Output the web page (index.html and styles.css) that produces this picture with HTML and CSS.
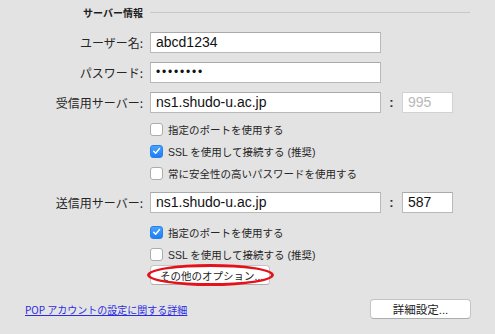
FILE: index.html
```html
<!DOCTYPE html>
<html lang="ja">
<head>
<meta charset="utf-8">
<title>サーバー情報</title>
<link rel="stylesheet" href="styles.css">
</head>
<body>
<div class="panel">
  <div class="section-head">
    <span class="section-title">サーバー情報</span>
    <span class="section-rule"></span>
  </div>

  <div class="field-row">
    <label class="field-label">ユーザー名:</label>
    <div class="text-field">abcd1234</div>
  </div>
  <div class="field-row">
    <label class="field-label">パスワード:</label>
    <div class="text-field password">••••••••</div>
  </div>
  <div class="field-row">
    <label class="field-label">受信用サーバー:</label>
    <div class="text-field">ns1.shudo-u.ac.jp</div>
    <span class="port-colon">:</span>
    <div class="text-field port disabled">995</div>
  </div>

  <div class="check-row"><span class="checkbox"></span><span class="check-text">指定のポートを使用する</span></div>
  <div class="check-row"><span class="checkbox checked"><svg viewBox="0 0 12 12"><path d="M3 6.3 L5.1 8.5 L9.2 3.4" /></svg></span><span class="check-text">SSL を使用して接続する (推奨)</span></div>
  <div class="check-row"><span class="checkbox"></span><span class="check-text">常に安全性の高いパスワードを使用する</span></div>

  <div class="field-row outgoing">
    <label class="field-label">送信用サーバー:</label>
    <div class="text-field">ns1.shudo-u.ac.jp</div>
    <span class="port-colon">:</span>
    <div class="text-field port">587</div>
  </div>

  <div class="check-row"><span class="checkbox checked"><svg viewBox="0 0 12 12"><path d="M3 6.3 L5.1 8.5 L9.2 3.4" /></svg></span><span class="check-text">指定のポートを使用する</span></div>
  <div class="check-row"><span class="checkbox"></span><span class="check-text">SSL を使用して接続する (推奨)</span></div>

  <div class="option-row">
    <span class="option-wrap">
      <button class="push-button option-button">その他のオプション...</button>
      <span class="highlight-ring"></span>
    </span>
  </div>

  <div class="footer-row">
    <a class="help-link" href="#">POP アカウントの設定に関する詳細</a>
    <button class="push-button detail-button">詳細設定...</button>
  </div>
</div>
</body>
</html>
```
FILE: styles.css
```css
html, body {
  margin: 0;
  padding: 0;
}
body {
  background: #e3e3e3;
  font-family: "Liberation Sans", "Noto Sans CJK JP", sans-serif;
  color: #222;
  width: 495px;
  height: 334px;
  overflow: hidden;
}
.panel {
  display: flex;
  flex-direction: column;
}
.section-head {
  display: flex;
  align-items: center;
  height: 25px;
  padding-left: 83px;
  width: 387px;
}
.section-title {
  font-size: 10px;
  font-weight: bold;
  color: #1e1e1e;
  font-family: "Noto Sans CJK JP", sans-serif;
}
.section-rule {
  flex: 1;
  height: 1px;
  background: #c8c8c8;
  margin-left: 7px;
}
.field-row {
  display: flex;
  align-items: center;
  height: 21px;
  margin-top: 7px;
  margin-bottom: 2px;
}
.field-label {
  width: 143px;
  padding-right: 7px;
  text-align: right;
  font-size: 12px;
  font-family: "Noto Sans CJK JP", sans-serif;
  color: #262626;
  box-sizing: content-box;
}
.text-field {
  box-sizing: border-box;
  width: 231px;
  height: 21px;
  background: #fff;
  border: 1px solid #b9b9b9;
  border-top-color: #a9a9a9;
  font-size: 14px;
  line-height: 19px;
  padding-left: 5px;
  color: #111;
  white-space: nowrap;
  overflow: hidden;
}
.text-field.password {
  font-size: 12px;
  letter-spacing: 1.8px;
  line-height: 19px;
}
.port-colon {
  width: 21px;
  text-align: center;
  font-size: 13px;
  font-weight: bold;
  color: #333;
}
.text-field.port {
  width: 51px;
}
.text-field.disabled {
  color: #b8b8b8;
  border-color: #d2d2d2;
}
.field-row.outgoing {
  margin-top: 8px;
  margin-bottom: 5px;
}
.check-row {
  display: flex;
  align-items: center;
  height: 22px;
  padding-left: 150px;
}
.field-row + .check-row { margin-top: 3px; }
.checkbox {
  box-sizing: border-box;
  width: 13px;
  height: 13px;
  border: 1px solid #acacac;
  border-radius: 3px;
  background: #fff;
  display: flex;
  align-items: center;
  justify-content: center;
  flex-shrink: 0;
}
.checkbox.checked {
  background: linear-gradient(#4aa3fd, #1c7ef7);
  border-color: #2a7fe8;
}
.checkbox svg {
  width: 12px;
  height: 12px;
}
.checkbox svg path {
  fill: none;
  stroke: #fff;
  stroke-width: 1.6;
  stroke-linecap: round;
  stroke-linejoin: round;
}
.check-text {
  margin-left: 5px;
  font-size: 10.5px;
  color: #262626;
  white-space: nowrap;
}
.option-row {
  display: flex;
  padding-left: 150px;
  height: 20px;
  margin-top: 0;
}
.option-wrap {
  position: relative;
  display: inline-flex;
}
.push-button {
  box-sizing: border-box;
  background: #fff;
  border: 1px solid #c4c4c4;
  border-bottom-color: #aeaeae;
  border-radius: 4px;
  font-family: "Liberation Sans", "Noto Sans CJK JP", sans-serif;
  font-size: 11px;
  color: #222;
  padding: 0;
  margin: 0;
  white-space: nowrap;
}
.option-button {
  width: 120px;
  height: 20px;
  text-align: left;
  padding-left: 9px;
  font-size: 10.5px;
}
.highlight-ring {
  position: absolute;
  left: -3px;
  top: -1px;
  width: 127px;
  height: 22px;
  box-sizing: border-box;
  border: 3px solid #e3131b;
  border-radius: 50%;
  pointer-events: none;
}
.footer-row {
  display: flex;
  align-items: center;
  justify-content: space-between;
  padding: 0 24px 0 25px;
  margin-top: 14px;
  height: 20px;
}
.help-link {
  font-size: 10px;
  color: #2b2be2;
  text-decoration: underline;
  font-family: "Noto Sans CJK JP", sans-serif;
}
.detail-button {
  width: 101px;
  height: 20px;
  font-size: 11.5px;
  text-align: center;
}
```
